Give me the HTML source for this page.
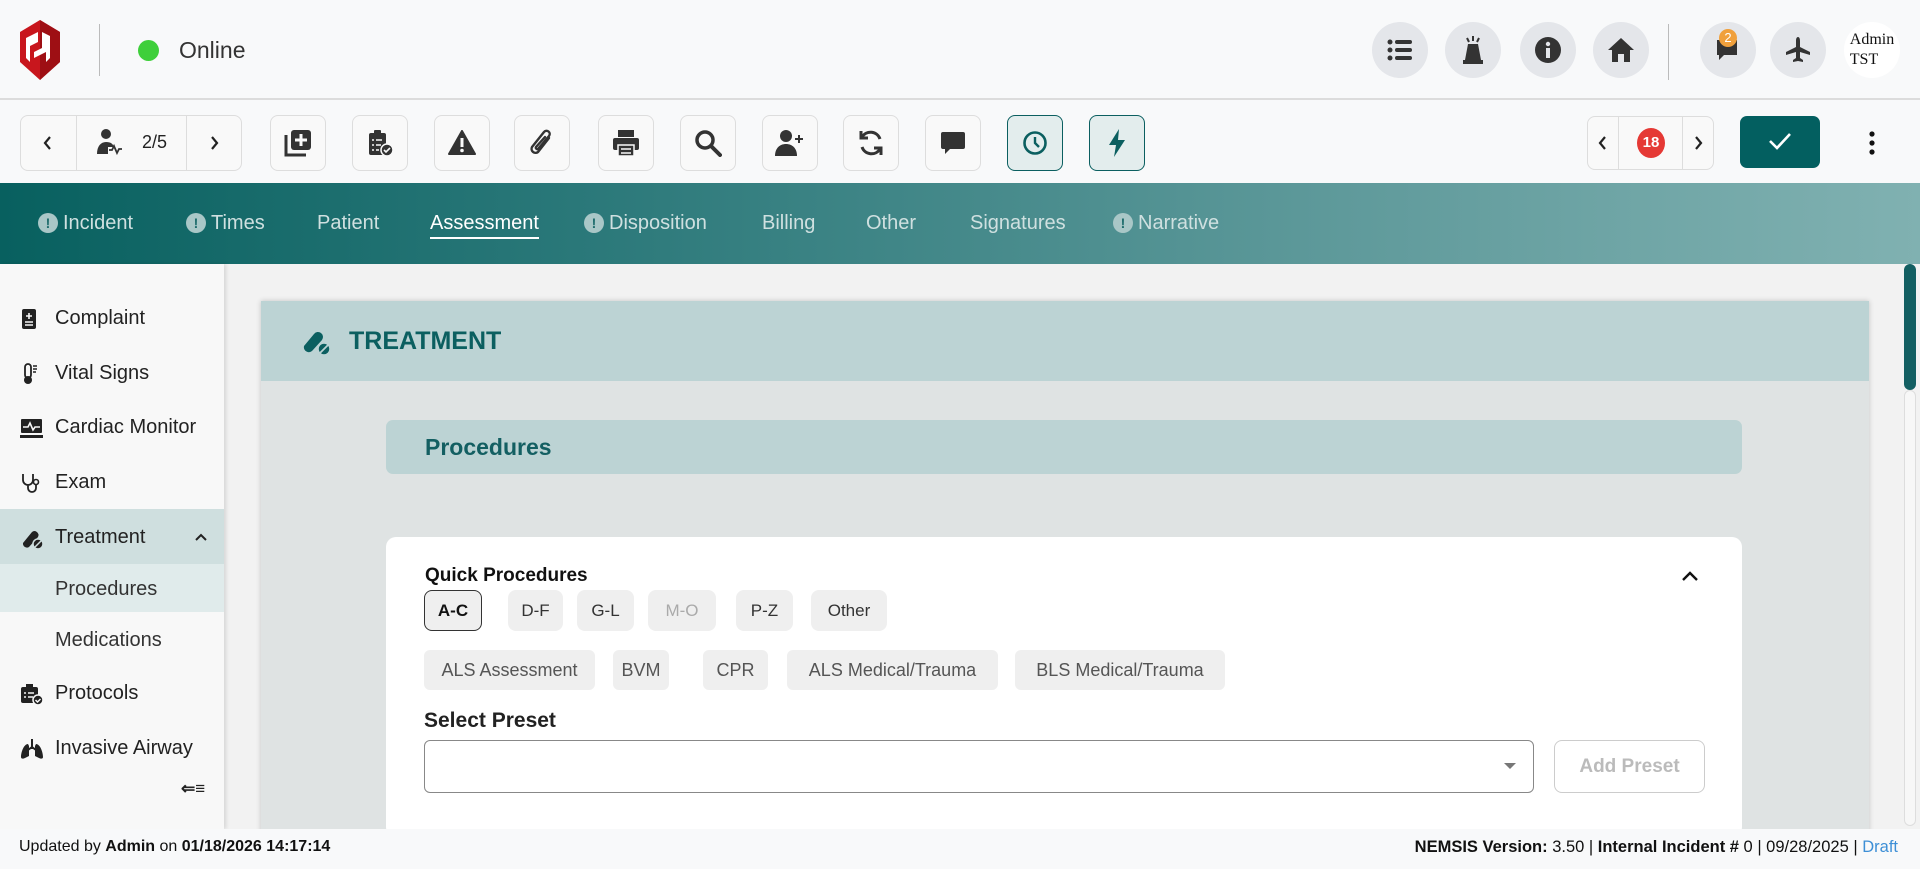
<!DOCTYPE html>
<html><head><meta charset="utf-8"><style>
*{box-sizing:border-box;margin:0;padding:0}
body{width:1920px;height:869px;overflow:hidden;background:#f2f2f2;font-family:"Liberation Sans",sans-serif;color:#222;position:relative}
.a{position:absolute}
.hdr{left:0;top:0;width:1920px;height:100px;background:#f8f9fa;border-bottom:2px solid #dcdcdc}
.circ{width:56px;height:56px;border-radius:50%;background:#e4e6ea;display:flex;align-items:center;justify-content:center;top:22px}
.tb{left:0;top:100px;width:1920px;height:83px;background:#f8f9fa}
.btn{width:56px;height:56px;top:115px;border:1px solid #ddd;border-radius:8px;background:#f9f9f9;display:flex;align-items:center;justify-content:center}
.btn.act{background:#e3eded;border-color:#0b5f60}
.nav{left:0;top:183px;width:1920px;height:81px;background:linear-gradient(90deg,#08605f 0%,#2a7879 30%,#5f9a9b 70%,#80b1b1 100%)}
.ni{top:212px;font-size:20px;color:#cfe0e0}
.ex{display:inline-block;width:20px;height:20px;border-radius:50%;background:#a9c7c7;color:#1f6d6d;font-size:14px;font-weight:bold;text-align:center;line-height:20px;margin-right:5px;vertical-align:1px}
.side{left:0;top:264px;width:224px;height:565px;background:#f8f8f8;box-shadow:2px 0 4px rgba(0,0,0,.12)}
.si{left:0;width:224px;font-size:20px;color:#222;height:40px;line-height:40px;padding-left:55px}
.si svg{position:absolute;left:20px;top:10px}
.chip{height:41px;top:590px;border-radius:8px;background:#efefef;font-size:17px;color:#333;display:flex;align-items:center;justify-content:center}
.chip2{height:40px;top:650px;border-radius:6px;background:#efefef;font-size:18px;color:#555;display:flex;align-items:center;justify-content:center}
</style></head><body>
<div class="a hdr"></div>
<svg class="a" style="left:16px;top:18px" width="48" height="64" viewBox="0 0 48 64"><path d="M24 2 L44 14 L44 44 L24 62 L4 44 L4 14Z" fill="#c8161d"/><path d="M24 2 L44 14 L44 44 L24 62Z" fill="#9e0f14"/><path d="M14 18 L22 14 L22 24 L14 28 L14 44 L10 40 L10 20Z M26 14 L34 18 L34 40 L30 44 L30 28 L26 30Z M18 34 L30 28 L30 34 L18 40Z" fill="#fff"/></svg>
<div class="a" style="left:99px;top:24px;width:1px;height:52px;background:#bbb"></div>
<div class="a" style="left:138px;top:40px;width:21px;height:21px;border-radius:50%;background:#3ecf3a"></div>
<div class="a" style="left:179px;top:37px;font-size:23px;color:#333">Online</div>
<div class="a circ" style="left:1372px"><svg width="26" height="22" viewBox="0 0 26 22"><circle cx="3" cy="3" r="2.5" fill="#333"/><circle cx="3" cy="11" r="2.5" fill="#333"/><circle cx="3" cy="19" r="2.5" fill="#333"/><rect x="8" y="1" width="17" height="4" rx="2" fill="#333"/><rect x="8" y="9" width="17" height="4" rx="2" fill="#333"/><rect x="8" y="17" width="17" height="4" rx="2" fill="#333"/></svg></div>
<div class="a circ" style="left:1445px"><svg width="24" height="28" viewBox="0 0 24 28"><path d="M7 8h10l3 16H4z" fill="#333"/><rect x="2" y="24" width="20" height="4" fill="#333"/><path d="M12 0v5M6 2l2 4M18 2l-2 4" stroke="#333" stroke-width="2"/></svg></div>
<div class="a circ" style="left:1520px"><svg width="26" height="26"><circle cx="13" cy="13" r="13" fill="#333"/><rect x="11" y="11" width="4" height="10" fill="#e4e6ea"/><circle cx="13" cy="7" r="2.2" fill="#e4e6ea"/></svg></div>
<div class="a circ" style="left:1593px"><svg width="28" height="26" viewBox="0 0 28 26"><path d="M14 1 L27 13 H23 V25 H17 V17 H11 V25 H5 V13 H1Z" fill="#333"/></svg></div>
<div class="a" style="left:1668px;top:24px;width:1px;height:56px;background:#bbb"></div>
<div class="a circ" style="left:1700px"><svg width="26" height="26" viewBox="0 0 26 26"><path d="M2 3h20v15H9l-5 5v-5H2z" fill="#333"/></svg></div>
<div class="a" style="left:1719px;top:29px;width:18px;height:18px;border-radius:50%;background:#f0a03c;color:#fff;font-size:13px;text-align:center;line-height:18px">2</div>
<div class="a circ" style="left:1770px"><svg width="28" height="28" viewBox="0 0 28 28"><path d="M14 1c1.5 0 2 2 2 4v6l10 5v3l-10-3v6l3 2v2l-5-1-5 1v-2l3-2v-6L2 19v-3l10-5V5c0-2 .5-4 2-4z" fill="#333"/></svg></div>
<div class="a circ" style="left:1844px;background:#fff;flex-direction:column;font-family:'Liberation Serif',serif;font-size:16px;line-height:20px;color:#111">Admin<br>TST</div>

<div class="a tb"></div>
<div class="a" style="left:20px;top:115px;width:222px;height:56px;border:1px solid #ddd;border-radius:8px;background:#f9f9f9"></div>
<div class="a" style="left:76px;top:115px;width:111px;height:56px;border-left:1px solid #ddd;border-right:1px solid #ddd"></div>
<svg class="a" style="left:42px;top:135px" width="10" height="16"><path d="M8 2L3 8l5 6" stroke="#222" stroke-width="2.2" fill="none"/></svg>
<svg class="a" style="left:210px;top:135px" width="10" height="16"><path d="M2 2l5 6-5 6" stroke="#222" stroke-width="2.2" fill="none"/></svg>
<svg class="a" style="left:96px;top:128px" width="28" height="28" viewBox="0 0 28 28"><circle cx="10" cy="6" r="5" fill="#333"/><path d="M1 26c0-8 4-12 9-12s7 2 8 5h-6v7z" fill="#333"/><path d="M13 22h3l2-4 3 7 2-4h3" stroke="#333" stroke-width="1.8" fill="none"/></svg>
<div class="a" style="left:142px;top:132px;font-size:18px;color:#222">2/5</div>
<div class="a btn" style="left:270px"><svg width="28" height="28" viewBox="0 0 28 28"><rect x="7" y="1" width="20" height="20" rx="3" fill="#333"/><path d="M2 6v20h20" stroke="#333" stroke-width="3" fill="none"/><path d="M17 5v12M11 11h12" stroke="#f9f9f9" stroke-width="3"/></svg></div>
<div class="a btn" style="left:352px"><svg width="28" height="28" viewBox="0 0 28 28"><rect x="3" y="4" width="17" height="22" rx="2" fill="#333"/><rect x="8" y="1" width="7" height="5" rx="1" fill="#333"/><path d="M6 11h2M10 11h6M6 16h2M10 16h5M6 21h2M10 21h3" stroke="#f9f9f9" stroke-width="1.6"/><circle cx="21" cy="21" r="6" fill="#333" stroke="#f9f9f9" stroke-width="1.5"/><path d="M18 21l2 2 4-4" stroke="#f9f9f9" stroke-width="1.6" fill="none"/></svg></div>
<div class="a btn" style="left:434px"><svg width="28" height="26" viewBox="0 0 28 26"><path d="M14 1 L27 24 H1Z" fill="#333" stroke="#333" stroke-linejoin="round" stroke-width="2"/><rect x="12.5" y="8" width="3" height="9" fill="#f9f9f9"/><circle cx="14" cy="20.5" r="1.8" fill="#f9f9f9"/></svg></div>
<div class="a btn" style="left:514px"><svg width="26" height="30" viewBox="0 0 26 30"><path d="M20 10 L9 24 a4 4 0 0 1 -6 -5 L15 4 a3 3 0 0 1 5 4 L9 21 a1.5 1.5 0 0 1 -2 -2 L16 9" stroke="#333" stroke-width="2.4" fill="none" stroke-linecap="round"/></svg></div>
<div class="a btn" style="left:598px"><svg width="28" height="28" viewBox="0 0 28 28"><rect x="6" y="1" width="16" height="7" fill="#333"/><rect x="1" y="9" width="26" height="12" rx="2" fill="#333"/><rect x="6" y="16" width="16" height="11" fill="#333" stroke="#f9f9f9" stroke-width="1.5"/><path d="M9 20h10M9 24h10" stroke="#f9f9f9" stroke-width="1.5"/></svg></div>
<div class="a btn" style="left:680px"><svg width="28" height="28" viewBox="0 0 28 28"><circle cx="11" cy="11" r="8" stroke="#333" stroke-width="3.5" fill="none"/><path d="M17 17l9 9" stroke="#333" stroke-width="4" stroke-linecap="round"/></svg></div>
<div class="a btn" style="left:762px"><svg width="30" height="28" viewBox="0 0 30 28"><circle cx="11" cy="7" r="6" fill="#333"/><path d="M0 27c0-8 5-12 11-12s11 4 11 12z" fill="#333"/><path d="M24 6v8M20 10h8" stroke="#333" stroke-width="2"/></svg></div>
<div class="a btn" style="left:843px"><svg width="28" height="28" viewBox="0 0 28 28"><path d="M23 10a10 10 0 0 0-18-2M5 18a10 10 0 0 0 18 2" stroke="#333" stroke-width="3" fill="none"/><path d="M4 2v7h7M24 26v-7h-7" stroke="#333" stroke-width="3" fill="none"/></svg></div>
<div class="a btn" style="left:925px"><svg width="26" height="26" viewBox="0 0 26 26"><path d="M3 2h20a2 2 0 0 1 2 2v13a2 2 0 0 1-2 2H10l-5 5v-5H3a2 2 0 0 1-2-2V4a2 2 0 0 1 2-2z" fill="#333"/></svg></div>
<div class="a btn act" style="left:1007px"><svg width="26" height="26" viewBox="0 0 26 26"><circle cx="13" cy="13" r="10.5" stroke="#0b5f60" stroke-width="2.6" fill="none"/><path d="M13 7v6l4 4" stroke="#0b5f60" stroke-width="2.4" fill="none"/></svg></div>
<div class="a btn act" style="left:1089px"><svg width="20" height="30" viewBox="0 0 20 30"><path d="M12 1 L2 17 H9 L7 29 L18 12 H11Z" fill="#0b5f60"/></svg></div>
<div class="a" style="left:1587px;top:116px;width:127px;height:54px;border:1px solid #ddd;border-radius:8px;background:#f9f9f9"></div>
<div class="a" style="left:1618px;top:116px;width:65px;height:54px;border-left:1px solid #ddd;border-right:1px solid #ddd"></div>
<svg class="a" style="left:1597px;top:135px" width="10" height="16"><path d="M8 2L3 8l5 6" stroke="#222" stroke-width="2.2" fill="none"/></svg>
<svg class="a" style="left:1694px;top:135px" width="10" height="16"><path d="M2 2l5 6-5 6" stroke="#222" stroke-width="2.2" fill="none"/></svg>
<div class="a" style="left:1637px;top:128px;width:28px;height:30px;border-radius:50%;background:#e53935;color:#fff;font-size:15px;font-weight:bold;text-align:center;line-height:30px">18</div>
<div class="a" style="left:1740px;top:116px;width:80px;height:52px;border-radius:7px;background:#035f60"></div>
<svg class="a" style="left:1768px;top:131px" width="24" height="20"><path d="M2 10l7 7L22 3" stroke="#fff" stroke-width="2.6" fill="none"/></svg>
<svg class="a" style="left:1868px;top:130px" width="8" height="26"><circle cx="4" cy="4" r="2.6" fill="#111"/><circle cx="4" cy="13" r="2.6" fill="#111"/><circle cx="4" cy="22" r="2.6" fill="#111"/></svg>

<div class="a nav"></div>
<div class="a ni" style="left:38px"><span class="ex">!</span>Incident</div>
<div class="a ni" style="left:186px"><span class="ex">!</span>Times</div>
<div class="a ni" style="left:317px">Patient</div>
<div class="a ni" style="left:430px;color:#fff;border-bottom:2px solid #fff;padding-bottom:2px">Assessment</div>
<div class="a ni" style="left:584px"><span class="ex">!</span>Disposition</div>
<div class="a ni" style="left:762px">Billing</div>
<div class="a ni" style="left:866px">Other</div>
<div class="a ni" style="left:970px">Signatures</div>
<div class="a ni" style="left:1113px"><span class="ex">!</span>Narrative</div>

<div class="a side"></div>
<div class="a" style="left:0;top:509px;width:224px;height:55px;background:#cfdfdf"></div>
<div class="a" style="left:0;top:564px;width:224px;height:48px;background:#e0ebeb"></div>
<div class="a si" style="top:298px"><svg width="18" height="22"><rect x="2" y="1" width="14" height="20" rx="2" fill="#222"/><path d="M9 5v6M6 8h6M5 14h8M5 17h8" stroke="#f8f8f8" stroke-width="1.6"/></svg>Complaint</div>
<div class="a si" style="top:353px"><svg width="18" height="22"><rect x="5" y="1" width="6" height="14" rx="3" stroke="#222" stroke-width="1.8" fill="none"/><circle cx="8" cy="17" r="4" fill="#222"/><path d="M13 3h4M13 6h4M13 9h3" stroke="#222" stroke-width="1.4"/></svg>Vital Signs</div>
<div class="a si" style="top:407px"><svg width="24" height="22"><rect x="1" y="2" width="21" height="14" rx="1" fill="#222"/><path d="M3 10h5l2-4 3 7 2-3h5" stroke="#f8f8f8" stroke-width="1.6" fill="none"/><rect x="0" y="18" width="23" height="3" fill="#222"/></svg>Cardiac Monitor</div>
<div class="a si" style="top:462px"><svg width="22" height="22"><path d="M3 2v6a5 5 0 0 0 10 0V2M8 13v3a4 4 0 0 0 8 0v-3" stroke="#222" stroke-width="1.8" fill="none"/><circle cx="16" cy="10" r="2.5" stroke="#222" stroke-width="1.6" fill="none"/></svg>Exam</div>
<div class="a si" style="top:517px"><svg width="24" height="22"><path d="M3 16 L12 5 a4 4 0 0 1 6 5 L9 20 a4 4 0 0 1 -6 -4z" fill="#222"/><circle cx="18" cy="17" r="5" fill="#222" stroke="#cfdfdf" stroke-width="1.5"/><path d="M15 20l6-6" stroke="#cfdfdf" stroke-width="1.5"/></svg>Treatment<svg style="left:194px;top:15px" width="14" height="10"><path d="M2 8l5-5 5 5" stroke="#222" stroke-width="2" fill="none"/></svg></div>
<div class="a si" style="top:569px;color:#333">Procedures</div>
<div class="a si" style="top:620px;color:#333">Medications</div>
<div class="a si" style="top:673px"><svg width="24" height="22"><rect x="1" y="4" width="17" height="16" rx="2" fill="#222"/><rect x="6" y="1" width="7" height="5" fill="#222"/><path d="M4 10h2M8 10h6M4 14h2M8 14h5" stroke="#f8f8f8" stroke-width="1.5"/><circle cx="18" cy="17" r="5" fill="#222" stroke="#f8f8f8" stroke-width="1.5"/><path d="M15.5 17l2 2 3-3" stroke="#f8f8f8" stroke-width="1.5" fill="none"/></svg>Protocols</div>
<div class="a si" style="top:728px"><svg width="24" height="22"><path d="M12 1v10M12 9l-4 3M12 9l4 3" stroke="#222" stroke-width="2"/><path d="M8 6C4 6 1 14 1 19c0 2 2 2 4 1l4-2V8z M16 6c4 0 7 8 7 13 0 2-2 2-4 1l-4-2V8z" fill="#222"/></svg>Invasive Airway</div>
<div class="a" style="left:181px;top:779px;font-size:17px;color:#222;font-weight:bold">⇐≡</div>

<div class="a" style="left:261px;top:301px;width:1608px;height:540px;background:#dfe3e3;box-shadow:0 0 5px rgba(0,0,0,.2)"></div>
<div class="a" style="left:261px;top:301px;width:1608px;height:80px;background:#bcd3d4"></div>
<svg class="a" style="left:300px;top:326px" width="32" height="30" viewBox="0 0 32 30"><path d="M4 20 L14 8 a5 5 0 0 1 8 6 L12 25 a5 5 0 0 1 -8 -5z" fill="#0b5f60"/><circle cx="24" cy="23" r="6" fill="#0b5f60" stroke="#bcd3d4" stroke-width="1.5"/><path d="M20 27l8-8" stroke="#bcd3d4" stroke-width="1.8"/></svg>
<div class="a" style="left:349px;top:327px;font-size:25px;font-weight:bold;color:#0b5f60">TREATMENT</div>
<div class="a" style="left:386px;top:420px;width:1356px;height:54px;border-radius:7px;background:#bcd3d4"></div>
<div class="a" style="left:425px;top:434px;font-size:23px;font-weight:bold;color:#135f62">Procedures</div>
<div class="a" style="left:386px;top:537px;width:1356px;height:300px;border-radius:10px;background:#fff"></div>
<div class="a" style="left:425px;top:565px;font-size:19px;font-weight:bold;color:#111">Quick Procedures</div>
<svg class="a" style="left:1681px;top:570px" width="18" height="12"><path d="M2 10l7-7 7 7" stroke="#111" stroke-width="2.4" fill="none"/></svg>
<div class="a chip" style="left:424px;width:58px;border:1.5px solid #333;font-weight:bold;color:#111">A-C</div>
<div class="a chip" style="left:508px;width:55px">D-F</div>
<div class="a chip" style="left:577px;width:57px">G-L</div>
<div class="a chip" style="left:648px;width:68px;color:#aaa">M-O</div>
<div class="a chip" style="left:736px;width:57px">P-Z</div>
<div class="a chip" style="left:811px;width:76px">Other</div>
<div class="a chip2" style="left:424px;width:171px">ALS Assessment</div>
<div class="a chip2" style="left:613px;width:56px">BVM</div>
<div class="a chip2" style="left:703px;width:65px">CPR</div>
<div class="a chip2" style="left:787px;width:211px">ALS Medical/Trauma</div>
<div class="a chip2" style="left:1015px;width:210px">BLS Medical/Trauma</div>
<div class="a" style="left:424px;top:709px;font-size:21px;font-weight:bold;color:#222">Select Preset</div>
<div class="a" style="left:424px;top:740px;width:1110px;height:53px;border:1.5px solid #888;border-radius:6px;background:#fff"></div>
<svg class="a" style="left:1503px;top:762px" width="14" height="8"><path d="M1 1h12L7 7z" fill="#777"/></svg>
<div class="a" style="left:1554px;top:740px;width:151px;height:53px;border:1.5px solid #ccc;border-radius:8px;display:flex;align-items:center;justify-content:center;font-size:19px;font-weight:bold;color:#bbb">Add Preset</div>

<div class="a" style="left:1899px;top:264px;width:21px;height:565px;background:#f2f2f2"></div>
<div class="a" style="left:1904px;top:264px;width:12px;height:126px;border-radius:6px;background:#135f62"></div>
<div class="a" style="left:1904px;top:390px;width:12px;height:436px;border-radius:6px;border:1px solid #ddd;background:#f7f7f7"></div>

<div class="a" style="left:0;top:829px;width:1920px;height:40px;background:#f8f9fa"></div>
<div class="a" style="left:19px;top:838px;font-size:16px;color:#111">Updated by <b>Admin</b> on <b>01/18/2026 14:17:14</b></div>
<div class="a" style="right:22px;top:838px;font-size:16.5px;color:#111"><b>NEMSIS Version:</b> 3.50 | <b>Internal Incident #</b> 0 | 09/28/2025 | <span style="color:#3d8fd6">Draft</span></div>
</body></html>
